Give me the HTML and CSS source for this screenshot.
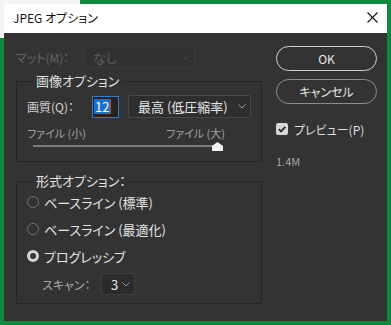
FILE: index.html
```html
<!DOCTYPE html>
<html lang="ja">
<head>
    <meta charset="UTF-8">
    <meta name="viewport" content="width=device-width, initial-scale=1.0">
    <title>JPEG オプション</title>
    <link rel="stylesheet" href="styles.css">
</head>
<body>
    <div class="screen">
        <div class="dialog">
            <div class="titlebar">
                <span class="title">JPEG オプション</span>
                <svg class="close" width="11" height="11" viewBox="0 0 11 11">
                    <path d="M0.5 0.5 L10.5 10.5 M10.5 0.5 L0.5 10.5" stroke="#111" stroke-width="1.1" fill="none"/>
                </svg>
            </div>

            <div class="content">
                <div class="left">
                    <div class="matte-row">
                        <span class="label disabled">マット(M)：</span>
                        <div class="select matte disabled">
                            <span>なし</span>
                            <svg class="chev" width="8" height="5" viewBox="0 0 8 5"><path d="M0.5 0.5 L4 4 L7.5 0.5" stroke="#4a4a4a" fill="none"/></svg>
                        </div>
                    </div>

                    <fieldset class="group image-group">
                        <legend>画像オプション</legend>
                        <div class="quality-row">
                            <span class="label">画質(Q)：</span>
                            <div class="num-input"><span class="sel-text">12</span><span class="caret"></span></div>
                            <div class="select quality">
                                <span>最高 (低圧縮率)</span>
                                <svg class="chev" width="8" height="5" viewBox="0 0 8 5"><path d="M0.5 0.5 L4 4 L7.5 0.5" stroke="#9a9a9a" fill="none"/></svg>
                            </div>
                        </div>
                        <div class="file-labels">
                            <span>ファイル (小)</span>
                            <span>ファイル (大)</span>
                        </div>
                        <div class="slider">
                            <div class="track"></div>
                            <svg class="thumb" width="11" height="9" viewBox="0 0 11 9"><path d="M5.5 0 L11 4 L11 9 L0 9 L0 4 Z" fill="#f2f2f2"/></svg>
                        </div>
                    </fieldset>

                    <fieldset class="group format-group">
                        <legend>形式オプション：</legend>
                        <div class="radio-row"><span class="radio"></span><span>ベースライン (標準)</span></div>
                        <div class="radio-row"><span class="radio"></span><span>ベースライン (最適化)</span></div>
                        <div class="radio-row"><span class="radio checked"></span><span>プログレッシブ</span></div>
                        <div class="scan-row">
                            <span class="label dim">スキャン：</span>
                            <div class="select scan">
                                <span>3</span>
                                <svg class="chev" width="8" height="5" viewBox="0 0 8 5"><path d="M0.5 0.5 L4 4 L7.5 0.5" stroke="#9a9a9a" fill="none"/></svg>
                            </div>
                        </div>
                    </fieldset>
                </div>

                <div class="right">
                    <button class="pill ok">OK</button>
                    <button class="pill">キャンセル</button>
                    <div class="check-row">
                        <span class="checkbox">
                            <svg width="12" height="12" viewBox="0 0 12 12"><path d="M2.8 6.2 L5 8.4 L9.3 3.8" stroke="#2a2a2a" stroke-width="1.8" fill="none"/></svg>
                        </span>
                        <span>プレビュー(P)</span>
                    </div>
                    <div class="size">1.4M</div>
                </div>
            </div>
        </div>
    </div>
</body>
</html>
```

FILE: styles.css
```css
* {
    margin: 0;
    padding: 0;
    box-sizing: border-box;
}

body {
    font-family: "Noto Sans CJK JP", "Noto Sans", sans-serif;
    font-feature-settings: "palt";
    background-color: #0f8a3d;
}

.screen {
    position: relative;
    width: 391px;
    height: 325px;
    padding: 4px 4px 0 4px;
    background-color: #0f8a3d;
}

/* trozo de la ventana de detrás */
.screen::before {
    content: "";
    position: absolute;
    left: 0;
    top: 0;
    width: 80px;
    height: 38px;
    background-color: #f4f4f4;
}

.dialog {
    position: relative;
    width: 383px;
    height: 317px;
    background-color: #333333;
    display: flex;
    flex-direction: column;
}

.titlebar {
    height: 29px;
    background-color: #ffffff;
    display: flex;
    align-items: center;
    justify-content: space-between;
    padding: 0 9px 0 9px;
}

.title {
    font-size: 12px;
    color: #111;
    padding-bottom: 2px;
}

.close {
    margin-top: -2px;
}

.content {
    display: flex;
    padding: 13px 0 0 12px;
}

.left {
    width: 246px;
    flex-shrink: 0;
}

.label {
    font-size: 12px;
    color: #d4d4d4;
    flex-shrink: 0;
}

.label.disabled {
    color: #636363;
}

.label.dim {
    color: #a8a8a8;
}

.matte-row {
    display: flex;
    align-items: center;
    height: 22px;
}

.matte-row .label {
    width: 67px;
}

.select {
    display: flex;
    align-items: center;
    justify-content: space-between;
    flex-shrink: 0;
    border: 1px solid #484848;
    border-radius: 2px;
    background-color: #2e2e2e;
    color: #e6e6e6;
    font-size: 13px;
    padding: 0 4px 0 9px;
}

.select.disabled {
    border-color: #3a3a3a;
    background-color: #313131;
    color: #5c5c5c;
}

.matte {
    width: 112px;
    height: 22px;
}

.group {
    border: 1px solid #252525;
    padding: 0 10px 0 10px;
}

.group legend {
    font-size: 13px;
    line-height: 16px;
    color: #e2e2e2;
    padding: 0 4px;
    margin-left: 5px;
}

.image-group {
    margin-top: 5px;
    padding-top: 6px;
    padding-bottom: 10px;
}

.quality-row {
    display: flex;
    align-items: center;
    height: 23px;
}

.quality-row .label {
    width: 65px;
}

.num-input {
    width: 27px;
    height: 22px;
    flex-shrink: 0;
    border: 1px solid #2f7bd2;
    background-color: #232323;
    display: flex;
    align-items: center;
    padding-left: 1px;
    font-size: 13px;
}

.sel-text {
    background-color: #1d6fd0;
    color: #ffffff;
    line-height: 15px;
    padding: 0 1px;
}

.caret {
    width: 1px;
    height: 15px;
    background-color: #c2521e;
}

.quality {
    width: 123px;
    height: 23px;
    margin-left: 9px;
}

.file-labels {
    display: flex;
    justify-content: space-between;
    width: 198px;
    margin-top: 8px;
    font-size: 11px;
    line-height: 14px;
    color: #a3a3a3;
}

.slider {
    position: relative;
    height: 10px;
    margin-top: 1px;
    margin-left: 6px;
}

.track {
    position: absolute;
    left: 0;
    top: 4px;
    width: 186px;
    height: 2px;
    background-color: #7c7c7c;
}

.thumb {
    position: absolute;
    left: 179px;
    top: 1px;
}

.format-group {
    margin-top: 11px;
    padding-top: 3px;
    padding-bottom: 8px;
}

.radio-row {
    display: flex;
    align-items: center;
    gap: 5px;
    height: 20px;
    margin-bottom: 7px;
    font-size: 13px;
    color: #e4e4e4;
}

.radio {
    flex-shrink: 0;
    width: 12px;
    height: 12px;
    border: 1px solid #727272;
    border-radius: 50%;
}

.radio.checked {
    border: 3.5px solid #d6d6d6;
    background-color: #3a3a3a;
}

.scan-row {
    display: flex;
    align-items: center;
    height: 22px;
    margin-top: 1px;
    padding-left: 15px;
}

.scan-row .label {
    width: 59px;
}

.scan {
    width: 34px;
    height: 22px;
    border-color: #3e3e3e;
    background-color: #2b2b2b;
}

.right {
    margin-left: 14px;
    width: 101px;
    display: flex;
    flex-direction: column;
}

.pill {
    height: 25px;
    border-radius: 13px;
    border: 1px solid #8e8e8e;
    background-color: transparent;
    color: #e8e8e8;
    font-family: inherit;
    font-feature-settings: "palt";
    font-size: 12px;
    margin-bottom: 8px;
}

.pill.ok {
    border: 1.5px solid #cfcfcf;
}

.check-row {
    display: flex;
    align-items: center;
    gap: 6px;
    height: 16px;
    margin-top: 9px;
    font-size: 12px;
    color: #dedede;
}

.checkbox {
    flex-shrink: 0;
    width: 12px;
    height: 12px;
    background-color: #d6d6d6;
    border-radius: 2px;
    display: flex;
}

.size {
    margin-top: 17px;
    font-size: 11px;
    line-height: 14px;
    color: #a6a6a6;
}
```
